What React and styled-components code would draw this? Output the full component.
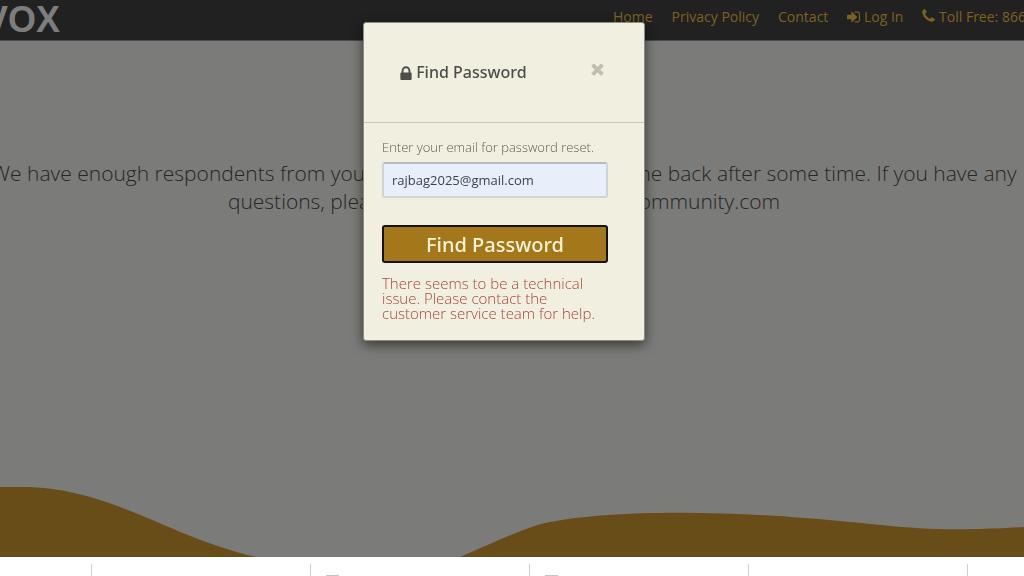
import React, { useState } from "react"
import styled, { createGlobalStyle } from "styled-components"

const GlobalStyle = createGlobalStyle`
  * {
    box-sizing: border-box;
  }
  body {
    margin: 0;
    overflow: hidden;
    font-family: "Open Sans", sans-serif;
    background: #fff;
  }
`

const Page = styled.div`
  display: flex;
  flex-direction: column;
  height: 100vh;
  margin-left: -16px;
`

const Header = styled.header`
  display: flex;
  justify-content: space-between;
  height: 41px;
  flex-shrink: 0;
  background: #212121;
  border-bottom: 1px solid #4a4a49;
`

const Logo = styled.a`
  font-family: "Liberation Sans", Arial, sans-serif;
  font-size: 36px;
  font-weight: 700;
  line-height: 40px;
  color: #7d7d7d;
  text-decoration: none;
`

const Nav = styled.nav`
  display: flex;
  gap: 19px;
  width: 411px;
  padding-top: 7px;
  white-space: nowrap;
`

const NavLink = styled.a`
  flex-shrink: 0;
  font-size: 14px;
  line-height: 20px;
  color: #7d621f;
  text-decoration: none;
`

const Hero = styled.main`
  display: flex;
  flex-direction: column;
  flex: 1;
  background: #7b7b79;
`

const Notice = styled.p`
  margin: 0;
  padding-top: 118px;
  font-size: 21px;
  font-weight: 300;
  line-height: 28px;
  text-align: center;
  white-space: nowrap;
  color: #262625;
`

const Wave = styled.svg`
  display: block;
  width: 100%;
  height: 72px;
  margin-top: auto;
  fill: #694d18;
`

const Footer = styled.footer`
  display: grid;
  grid-template-columns: 107px repeat(4, 219px) 1fr;
  height: 19px;
  padding-top: 7px;
  background: #fff;
`

const FooterColumn = styled.div`
  padding: 11px 0 0 15px;
  border-left: ${props => (props.$first ? "none" : "1px solid #d0d0d0")};
`

const Mark = styled.div`
  width: 13px;
  height: 1px;
  background: #c4c4c4;
`

const Overlay = styled.div`
  position: fixed;
  top: 0;
  left: -16px;
  right: 0;
  padding-top: 22px;
  display: flex;
  justify-content: center;
`

const Dialog = styled.div`
  width: 282px;
  background: #f1efdf;
  border: 1px solid #8c8c80;
  border-radius: 3px;
  box-shadow: 0 4px 12px rgba(0, 0, 0, 0.55);
`

const DialogHeader = styled.div`
  display: flex;
  justify-content: space-between;
  align-items: flex-start;
  padding: 37px 37px 38px 36px;
  border-bottom: 1px solid #c8c7ba;
`

const DialogTitle = styled.h2`
  margin: 0;
  font-family: "Noto Sans", sans-serif;
  font-size: 16px;
  font-weight: 500;
  line-height: 24px;
  color: #4d4d49;
`

const CloseButton = styled.button`
  display: flex;
  padding: 0;
  border: none;
  background: none;
  color: #bfbeb1;
  cursor: pointer;
`

const Form = styled.form`
  display: flex;
  flex-direction: column;
  padding: 14px 36px 19px 18px;
`

const Label = styled.label`
  margin-bottom: 5px;
  font-size: 13px;
  font-weight: 300;
  line-height: 20px;
  white-space: nowrap;
  color: #5e5d55;
`

const EmailInput = styled.input`
  height: 36px;
  padding: 0 8px;
  font-family: inherit;
  font-size: 13px;
  color: #3c4450;
  background: #e6effa;
  border: 2px solid #d0d4d6;
  border-top-color: #b5bbc1;
  border-radius: 3px;
  outline: none;
`

const SubmitButton = styled.button`
  height: 38px;
  margin-top: 27px;
  padding: 0;
  font-family: "Noto Sans", sans-serif;
  font-size: 20px;
  font-weight: 500;
  color: #fcf3d4;
  background: #a3771a;
  border: 2px solid #16130c;
  border-radius: 3px;
  cursor: pointer;
`

const ErrorText = styled.p`
  margin: 13px 0 0;
  font-size: 15px;
  font-weight: 300;
  line-height: 15px;
  white-space: nowrap;
  color: #a8463d;
`

const Icon = styled.svg`
  width: ${props => props.$width}px;
  height: ${props => props.$height}px;
  fill: currentColor;
  vertical-align: -2px;
`

const icons = {
  signIn:
    "M1312 896q0 26-19 45l-544 544q-19 19-45 19t-45-19-19-45v-288h-448q-26 0-45-19t-19-45v-384q0-26 19-45t45-19h448v-288q0-26 19-45t45-19 45 19l544 544q19 19 19 45zm352-352v704q0 119-84.5 203.5t-203.5 84.5h-320q-13 0-22.5-9.5t-9.5-22.5q0-4-1-20t-.5-26.5 3-23.5 10-19.5 20.5-6.5h320q66 0 113-47t47-113v-704q0-66-47-113t-113-47h-312l-11.5-1-11.5-3-8-5.5-7-9-2-13.5q0-4-1-20t-.5-26.5 3-23.5 10-19.5 20.5-6.5h320q119 0 203.5 84.5t84.5 203.5z",
  phone:
    "M1600 1240q0 27-10 70.5t-21 68.5q-21 50-122 106-94 51-186 51-27 0-53-3.5t-57-12.5-47-14.5-55.5-20.5-49.5-18q-98-35-175-83-127-79-264-216t-216-264q-48-77-83-175-3-9-18-49.5t-20.5-55.5-14.5-47-12.5-57-3.5-53q0-92 51-186 56-101 106-122 25-11 68.5-21t70.5-10q14 0 21 3 18 6 53 76 11 19 30 54t35 63.5 31 53.5q3 4 17.5 25t21.5 35.5 7 28.5q0 20-28.5 50t-62 55-62 53-28.5 46q0 9 5 22.5t8.5 20.5 14 24 11.5 19q76 137 174 235t235 174q2 1 19 11.5t24 14 20.5 8.5 22.5 5q18 0 46-28.5t53-62 55-62 50-28.5q14 0 28.5 7t35.5 21.5 25 17.5q25 15 53.5 31t63.5 35 54 30q70 35 76 53 3 7 3 21z",
  lock: "M640 768h512v-192q0-106-75-181t-181-75-181 75-75 181v192zm832 96v576q0 40-28 68t-68 28h-960q-40 0-68-28t-28-68v-576q0-40 28-68t68-28h32v-192q0-184 132-316t316-132 316 132 132 316v192h32q40 0 68 28t28 68z",
  times:
    "M1490 1322q0 40-28 68l-136 136q-28 28-68 28t-68-28l-294-294-294 294q-28 28-68 28t-68-28l-136-136q-28-28-28-68t28-68l294-294-294-294q-28-28-28-68t28-68l136-136q28-28 68-28t68 28l294 294 294-294q28-28 68-28t68 28l136 136q28 28 28 68t-28 68l-294 294 294 294q28 28 28 68z",
}

const Glyph = ({ name, width, height, box }) => (
  <Icon viewBox={box} $width={width} $height={height} aria-hidden="true">
    <path d={icons[name]} />
  </Icon>
)

const App = () => {
  const [email, setEmail] = useState("rajbag2025@gmail.com")

  return (
    <>
      <GlobalStyle />
      <Page>
        <Header>
          <Logo href="#">VOX</Logo>
          <Nav>
            <NavLink href="#">Home</NavLink>
            <NavLink href="#">Privacy Policy</NavLink>
            <NavLink href="#">Contact</NavLink>
            <NavLink href="#">
              <Glyph
                name="signIn"
                width={13}
                height={14}
                box="128 128 1536 1536"
              />{" "}
              Log In
            </NavLink>
            <NavLink href="#">
              <Glyph
                name="phone"
                width={13}
                height={16}
                box="192 0 1408 1792"
              />{" "}
              Toll Free: 866
            </NavLink>
          </Nav>
        </Header>
        <Hero>
          <Notice>
            We have enough respondents from your region right now. Please come
            back after some time. If you have any
            <br />
            questions, please email us at support@thecommunity.com
          </Notice>
          <Wave viewBox="0 0 1040 72" preserveAspectRatio="none">
            <path d="M0 2 H38 C126 2 184 52 272 72 H0Z" />
            <path d="M476 72 C496 64 530 47 557 39 C620 24 740 26 820 33 C890 38 930 46 990 44 C1008 44 1022 43 1040 42 V72Z" />
          </Wave>
        </Hero>
        <Footer>
          <FooterColumn $first />
          <FooterColumn />
          <FooterColumn>
            <Mark />
          </FooterColumn>
          <FooterColumn>
            <Mark />
          </FooterColumn>
          <FooterColumn />
          <FooterColumn />
        </Footer>
      </Page>

      <Overlay>
        <Dialog role="dialog" aria-labelledby="dialog-title">
          <DialogHeader>
            <DialogTitle id="dialog-title">
              <Glyph
                name="lock"
                width={12}
                height={15}
                box="320 0 1152 1536"
              />{" "}
              Find Password
            </DialogTitle>
            <CloseButton type="button" aria-label="Close">
              <Glyph
                name="times"
                width={19}
                height={18}
                box="0 0 1792 1792"
              />
            </CloseButton>
          </DialogHeader>
          <Form onSubmit={e => e.preventDefault()}>
            <Label htmlFor="email">Enter your email for password reset.</Label>
            <EmailInput
              id="email"
              type="email"
              value={email}
              onChange={e => setEmail(e.target.value)}
            />
            <SubmitButton type="submit">Find Password</SubmitButton>
            <ErrorText role="alert">
              There seems to be a technical
              <br />
              issue. Please contact the
              <br />
              customer service team for help.
            </ErrorText>
          </Form>
        </Dialog>
      </Overlay>
    </>
  )
}

export default App
